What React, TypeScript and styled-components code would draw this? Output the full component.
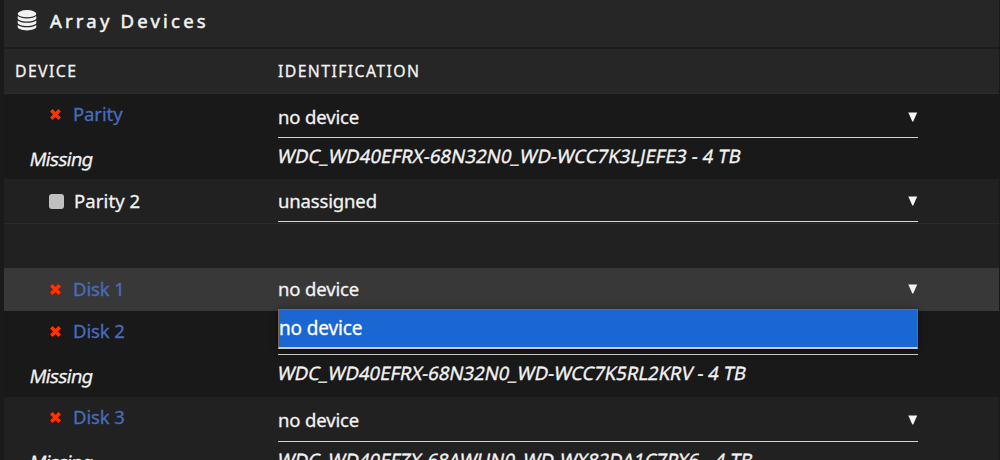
import React from 'react'
import styled, { createGlobalStyle } from 'styled-components'

const GlobalStyle = createGlobalStyle`
  * {
    box-sizing: border-box;
  }
  body {
    margin: 0;
    background: #1a1a1a;
    overflow: hidden;
  }
`

const Page = styled.div`
  height: 460px;
  padding: 0 1px 0 4px;
  overflow: hidden;
  font-family: 'Noto Sans', 'Open Sans', sans-serif;
  font-size: 18.5px;
  letter-spacing: -0.15px;
  color: #f2f2f2;
  -webkit-text-stroke-width: 0.3px;
`

const TitleBar = styled.div`
  display: flex;
  align-items: center;
  height: 47px;
  padding: 0 0 7px 13px;
  gap: 13px;
  background: #262626;
`

const Title = styled.span`
  font-size: 18.5px;
  letter-spacing: 3.2px;
  -webkit-text-stroke-width: 0.5px;
`

const Columns = styled.div`
  display: grid;
  grid-template-columns: 274px 640px;
  align-items: center;
  height: 47px;
  border-top: 2px solid #1c1c1c;
  border-bottom: 1px solid #2d2d2d;
  background: #262626;
  font-size: 15.8px;
  letter-spacing: 1.4px;
`

const HeadCell = styled.span<{ $indent?: number }>`
  padding-left: ${p => p.$indent || 0}px;
`

const Row = styled.div<{ $bg: string; $height: number; $line?: string }>`
  display: grid;
  grid-template-columns: 274px 640px;
  height: ${p => p.$height}px;
  background: ${p => p.$bg};
  border-bottom: ${p => (p.$line ? `1px solid ${p.$line}` : 'none')};
`

const DeviceCell = styled.div<{ $top: number }>`
  padding-top: ${p => p.$top}px;
`

const DeviceName = styled.div<{ $link?: boolean }>`
  display: flex;
  align-items: center;
  height: 26px;
  padding-left: 44px;
  gap: 10px;
  line-height: 26px;
  letter-spacing: ${p => (p.$link ? -0.1 : 0.1)}px;
  color: ${p => (p.$link ? '#486dba' : '#f2f2f2')};
`

const Slanted = styled.span`
  display: inline-block;
  transform: skewX(-11deg);
  white-space: nowrap;
`

const Missing = styled.div`
  margin-top: 19px;
  padding-left: 26px;
  line-height: 26px;
  font-size: 18.5px;
  letter-spacing: -0.55px;
`

const Square = styled.span`
  width: 15px;
  height: 15px;
  margin-left: 1px;
  border-radius: 3px;
  background: #c0c0c0;
`

const IdCell = styled.div`
  position: relative;
`

const Select = styled.div<{ $height: number; $top: number; $plain?: boolean }>`
  display: flex;
  justify-content: space-between;
  align-items: flex-start;
  height: ${p => p.$height}px;
  padding-top: ${p => p.$top}px;
  line-height: 26px;
  border-bottom: ${p => (p.$plain ? 'none' : '1px solid #d4d4d4')};
`

const Arrow = styled.svg`
  width: 10px;
  height: 10px;
  margin: 8px 0 0 auto;
`

const Serial = styled.div<{ $spacing?: number }>`
  margin-top: 5px;
  line-height: 26px;
  font-size: 18.5px;
  letter-spacing: ${p => p.$spacing || 0}px;
  -webkit-text-stroke-width: 0.35px;
`

const Dropdown = styled.div`
  position: absolute;
  z-index: 2;
  top: 41px;
  left: 0;
  width: 640px;
  height: 40px;
  border: 1px solid #75685a;
  border-bottom: 2px solid #d0cbc5;
  background: #1a66d3;
  box-shadow: 0 1px 8px rgba(0, 0, 0, 0.45);
  color: #fff;
  font-size: 19px;
  line-height: 37px;
`

const Cross = () => (
  <svg width="15" height="14" viewBox="0 0 15 14">
    <path d="M3.300 3.300L11.700 11.700M11.700 3.300L3.300 11.700" stroke="#ff3300" strokeWidth="3.6" />
  </svg>
)

const DatabaseIcon = () => (
  <svg width="20" height="21" viewBox="0 0 20 21" fill="#f2f2f2">
    <ellipse cx="10" cy="3.7" rx="9.3" ry="3.6" />
    <path d="M.7 6.1c1.900 1.500 5.300 2.300 9.300 2.300s7.400-.8 9.300-2.300v2.200c0 1.800-4.200 3.300-9.300 3.300S.7 10.100.7 8.300z" />
    <path d="M.7 10.500c1.900 1.500 5.300 2.300 9.300 2.300s7.400-.8 9.300-2.300v2.200c0 1.800-4.200 3.300-9.300 3.300S.7 14.500.7 12.700z" />
    <path d="M.7 14.900c1.900 1.500 5.300 2.300 9.300 2.300s7.400-.8 9.300-2.300v2.200c0 1.800-4.200 3.300-9.300 3.300S.7 18.900.7 17.100z" />
  </svg>
)

interface Device {
  name: string
  value?: string
  serial?: string
  spacing?: number
  unassigned?: boolean
  open?: boolean
  bg: string
  line?: string
  height: number
  nameTop: number
  selectTop: number
  selectHeight: number
}

const parity: Device[] = [
  { name: 'Parity', value: 'no device', serial: 'WDC_WD40EFRX-68N32N0_WD-WCC7K3LJEFE3 - 4 TB', spacing: 0.12, bg: '#191919', height: 85, nameTop: 7, selectTop: 10, selectHeight: 44 },
  { name: 'Parity 2', value: 'unassigned', unassigned: true, bg: '#212121', line: '#2b2b2b', height: 45, nameTop: 9, selectTop: 9, selectHeight: 43 },
]

const disks: Device[] = [
  { name: 'Disk 1', value: 'no device', open: true, bg: '#383838', height: 43, nameTop: 8, selectTop: 8, selectHeight: 43 },
  { name: 'Disk 2', serial: 'WDC_WD40EFRX-68N32N0_WD-WCC7K5RL2KRV - 4 TB', bg: '#191919', height: 86, nameTop: 7, selectTop: 10, selectHeight: 44 },
  { name: 'Disk 3', value: 'no device', serial: 'WDC_WD40EFZX-68AWUN0_WD-WX82DA1C7PX6 - 4 TB', bg: '#212121', height: 86, nameTop: 7, selectTop: 10, selectHeight: 45 },
]

const DeviceRow = ({ device }: { device: Device }) => (
  <Row $bg={device.bg} $height={device.height} $line={device.line}>
    <DeviceCell $top={device.nameTop}>
      <DeviceName $link={!device.unassigned}>
        {device.unassigned ? <Square /> : <Cross />}
        <span>{device.name}</span>
      </DeviceName>
      {device.serial && <Missing><Slanted>Missing</Slanted></Missing>}
    </DeviceCell>
    <IdCell>
      <Select $height={device.selectHeight} $top={device.selectTop} $plain={device.open}>
        {device.value && <span>{device.value}</span>}
        {device.value && (
          <Arrow viewBox="0 0 10 10">
            <path d="M0.300 0.500H9.200L5.200 9.500H4.300Z" fill="#f4f4f4" />
          </Arrow>
        )}
      </Select>
      {device.serial && <Serial $spacing={device.spacing}><Slanted>{device.serial}</Slanted></Serial>}
      {device.open && <Dropdown>{device.value}</Dropdown>}
    </IdCell>
  </Row>
)

function App() {
  return (
    <>
      <GlobalStyle />
      <Page>
        <TitleBar>
          <DatabaseIcon />
          <Title>Array Devices</Title>
        </TitleBar>
        <Columns>
          <HeadCell $indent={11}>DEVICE</HeadCell>
          <HeadCell>IDENTIFICATION</HeadCell>
        </Columns>
        {parity.map(d => <DeviceRow key={d.name} device={d} />)}
        <Row $bg="#212121" $height={44} />
        {disks.map(d => <DeviceRow key={d.name} device={d} />)}
      </Page>
    </>
  )
}

export default App
